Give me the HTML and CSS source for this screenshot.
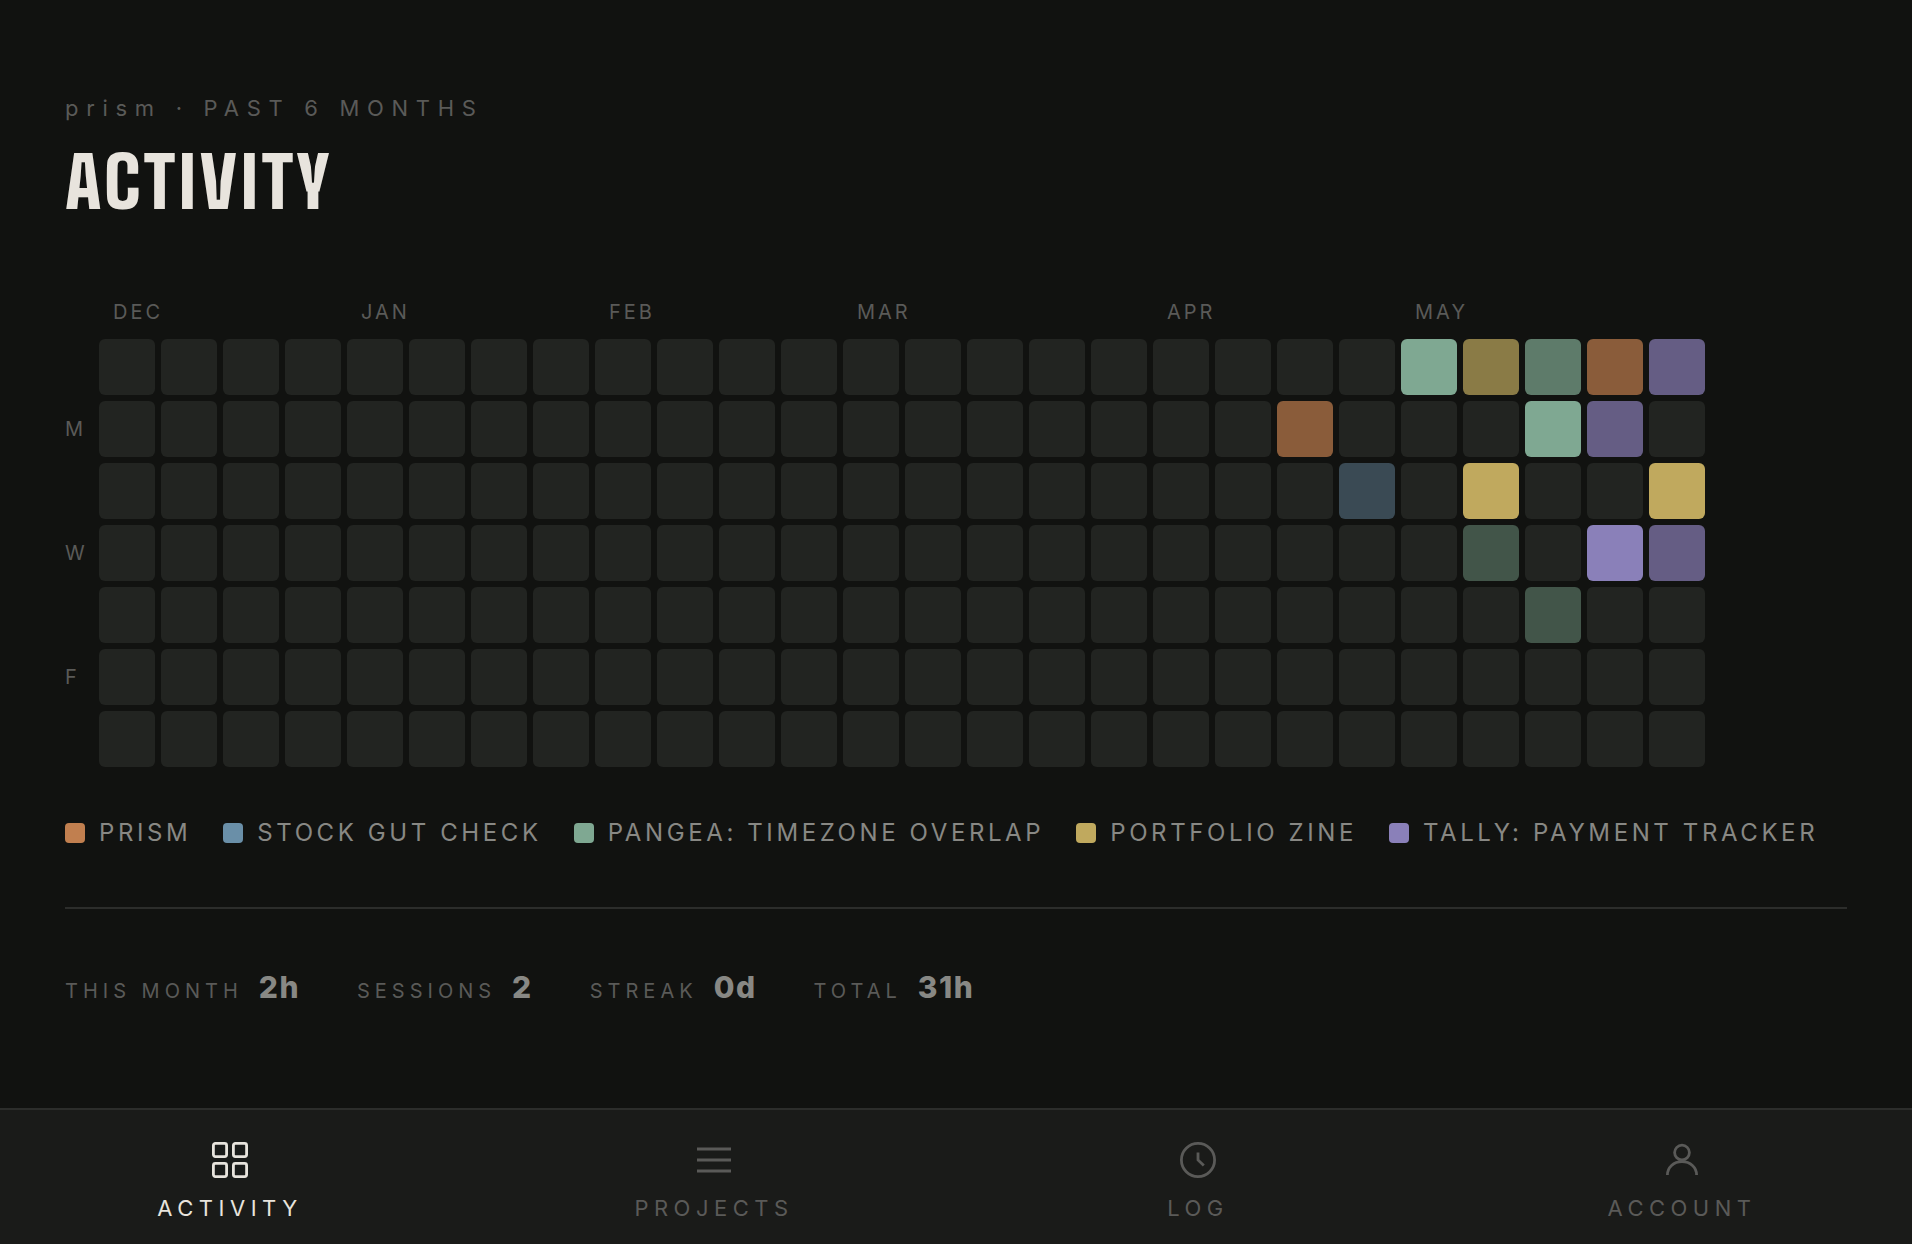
FILE: index.html
```
<!DOCTYPE html>
<html lang="en">
<head>
    <meta charset="UTF-8">
    <meta name="viewport" content="width=device-width, initial-scale=1.0">
    <title>prism - Activity</title>
    <link rel="stylesheet" href="styles.css">
</head>
<body>
    <main class="page">
        <header class="header">
            <p class="eyebrow">prism · PAST 6 MONTHS</p>
            <h1>ACTIVITY</h1>
        </header>

        <section class="heatmap" id="heatmap" aria-label="Activity by day"></section>

        <ul class="legend">
            <li><span class="swatch prism"></span>PRISM</li>
            <li><span class="swatch stock"></span>STOCK GUT CHECK</li>
            <li><span class="swatch pangea"></span>PANGEA: TIMEZONE OVERLAP</li>
            <li><span class="swatch zine"></span>PORTFOLIO ZINE</li>
            <li><span class="swatch tally"></span>TALLY: PAYMENT TRACKER</li>
        </ul>

        <dl class="stats">
            <div class="stat"><dt>THIS MONTH</dt><dd>2h</dd></div>
            <div class="stat"><dt>SESSIONS</dt><dd>2</dd></div>
            <div class="stat"><dt>STREAK</dt><dd>0d</dd></div>
            <div class="stat"><dt>TOTAL</dt><dd>31h</dd></div>
        </dl>
    </main>

    <nav class="tabs">
        <a class="tab active" href="#activity" aria-current="page">
            <svg viewBox="0 0 40 40">
                <rect x="3.4" y="3.4" width="13.2" height="13.2" rx="2"/>
                <rect x="23.4" y="3.4" width="13.2" height="13.2" rx="2"/>
                <rect x="3.4" y="23.4" width="13.2" height="13.2" rx="2"/>
                <rect x="23.4" y="23.4" width="13.2" height="13.2" rx="2"/>
            </svg>
            <span>ACTIVITY</span>
        </a>
        <a class="tab" href="#projects">
            <svg viewBox="0 0 40 40">
                <path d="M3 9h34M3 20h34M3 31h34"/>
            </svg>
            <span>PROJECTS</span>
        </a>
        <a class="tab" href="#log">
            <svg viewBox="0 0 40 40">
                <circle cx="20" cy="20" r="16.6"/>
                <path d="M20 12.6V20l5.8 5.4"/>
            </svg>
            <span>LOG</span>
        </a>
        <a class="tab" href="#account">
            <svg viewBox="0 0 40 40">
                <circle cx="20" cy="12.6" r="7.4"/>
                <path d="M5.4 35c0-7.6 6.2-13.4 14.6-13.4S34.6 27.4 34.6 35"/>
            </svg>
            <span>ACCOUNT</span>
        </a>
    </nav>

    <script>
        const WEEKS = 26;
        const DAYS = ['', 'M', '', 'W', '', 'F', ''];
        const MONTHS = { 0: 'DEC', 4: 'JAN', 8: 'FEB', 12: 'MAR', 17: 'APR', 21: 'MAY' };

        // "week-day": project and level
        const ENTRIES = {
            '19-1': 'prism mid',
            '20-2': 'stock low',
            '21-0': 'pangea',
            '22-0': 'zine mid',
            '22-2': 'zine',
            '22-3': 'pangea low',
            '23-0': 'pangea mid',
            '23-1': 'pangea',
            '23-4': 'pangea low',
            '24-0': 'prism mid',
            '24-1': 'tally mid',
            '24-3': 'tally',
            '25-0': 'tally mid',
            '25-2': 'zine',
            '25-3': 'tally mid'
        };

        let html = '<span></span>';
        for (let week = 0; week < WEEKS; week++) {
            html += `<span class="month">${MONTHS[week] || ''}</span>`;
        }
        DAYS.forEach((label, day) => {
            html += `<span class="day">${label}</span>`;
            for (let week = 0; week < WEEKS; week++) {
                html += `<span class="cell ${ENTRIES[`${week}-${day}`] || ''}"></span>`;
            }
        });
        document.getElementById('heatmap').innerHTML = html;
    </script>
</body>
</html>
```
FILE: styles.css
```
* {
    box-sizing: border-box;
    margin: 0;
    padding: 0;
}
body {
    display: flex;
    flex-direction: column;
    min-height: 100vh;
    background-color: #111210;
    color: #888884;
    font-family: Inter, "Liberation Sans", sans-serif;
}
.page {
    flex: 1;
    padding: 94px 65px 40px;
}
.header {
    margin-bottom: 76px;
}
.eyebrow {
    color: #5a5a58;
    font-size: 22px;
    line-height: 28px;
    letter-spacing: 0.35em;
}
h1 {
    margin-top: 18px;
    color: #e8e4dd;
    font-family: "Big Shoulders Text", "Big Shoulders Display", "Liberation Sans Narrow", sans-serif;
    font-size: 71px;
    font-weight: 900;
    line-height: 84px;
    letter-spacing: 0.05em;
}
.heatmap {
    display: grid;
    grid-template-columns: 28px repeat(26, 56px);
    gap: 6px;
}
.month {
    width: 0;
    margin-bottom: 9px;
    padding-left: 14px;
    color: #5a5a58;
    font-size: 20px;
    line-height: 24px;
    letter-spacing: 0.15em;
    white-space: nowrap;
}
.day {
    align-self: center;
    color: #5a5a58;
    font-size: 20px;
    line-height: 24px;
}
.cell {
    height: 56px;
    border-radius: 6px;
    background-color: #222421;
}
.prism { background-color: #c17f4f; }
.prism.mid { background-color: #8a5c3a; }
.stock { background-color: #6a8fa8; }
.stock.low { background-color: #3a4a54; }
.pangea { background-color: #7fa892; }
.pangea.mid { background-color: #5e7b6a; }
.pangea.low { background-color: #425549; }
.zine { background-color: #c0a95e; }
.zine.mid { background-color: #8a7b46; }
.tally { background-color: #8a80b9; }
.tally.mid { background-color: #655d84; }
.legend {
    display: flex;
    flex-wrap: wrap;
    gap: 16px 32px;
    margin-top: 50px;
    list-style: none;
}
.legend li {
    display: flex;
    align-items: center;
    gap: 14px;
    font-size: 24px;
    line-height: 32px;
    letter-spacing: 0.15em;
}
.swatch {
    width: 20px;
    height: 20px;
    border-radius: 4px;
}
.stats {
    display: flex;
    flex-wrap: wrap;
    gap: 16px 57px;
    margin-top: 58px;
    padding-top: 59px;
    border-top: 2px solid #2c2d2b;
}
.stat {
    display: flex;
    align-items: baseline;
    gap: 16px;
}
.stat dt {
    color: #5a5a58;
    font-size: 20px;
    letter-spacing: 0.25em;
}
.stat dd {
    font-size: 30px;
    font-weight: 800;
    line-height: 38px;
    letter-spacing: 0.05em;
}
.tabs {
    display: grid;
    grid-template-columns: repeat(4, 1fr);
    gap: 24px;
    border-top: 2px solid #2c2d2b;
    background-color: #1a1b19;
}
.tab {
    display: flex;
    flex-direction: column;
    align-items: center;
    gap: 14px;
    padding: 30px 0 22px;
    color: #5a5a58;
    font-size: 22px;
    line-height: 28px;
    letter-spacing: 0.25em;
    text-decoration: none;
}
.tab.active {
    color: #e8e4dd;
}
.tab svg {
    width: 40px;
    height: 40px;
    fill: none;
    stroke: currentColor;
    stroke-width: 2.8;
}
```
